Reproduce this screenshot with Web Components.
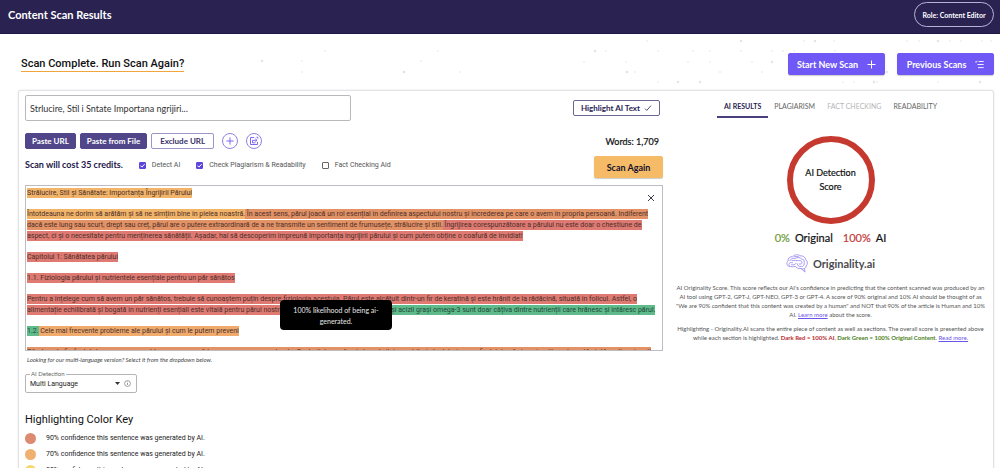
<!DOCTYPE html>
<html lang="en">
<head>
<meta charset="utf-8">
<title>Content Scan Results</title>
<style>
html{height:100%}
body{margin:0;height:100%;overflow:hidden;background:#fff;color:#111;font-family:Lato,"Liberation Sans",sans-serif;font-size:8px}
</style>
</head>
<body>
<scan-page></scan-page>

<template id="scan-page">
<style>
:host{display:block;height:100%;overflow:hidden}
main{position:relative;padding:0 6px 0 18px}
dot-field{position:absolute;top:0;right:0;z-index:-1}
.sub{display:flex;align-items:center;height:56px;padding:4px 0 0 3px;box-sizing:border-box;gap:12px}
h2{margin:0 auto 0 0;font:500 11px/14px Roboto,sans-serif;border-bottom:1px solid #f0a63c;color:#111}
.card{display:grid;grid-template-columns:minmax(0,2fr) minmax(0,1fr);gap:8px;padding:4px 3px 20px 6px;border:1px solid #e3e3e5;border-radius:3px;box-shadow:0 0 2px #0002;background:#fff}
</style>
<top-bar><span slot="title">Content Scan Results</span><span slot="role">Role: Content Editor</span></top-bar>
<main>
<dot-field></dot-field>
<div class="sub">
<h2>Scan Complete. Run Scan Again?</h2>
<ui-button kind="primary">Start New Scan<svg slot="icon" width="9" height="9" viewBox="0 0 9 9" fill="none" stroke="#fff"><path d="M4.5 .5v8M.5 4.5h8"/></svg></ui-button>
<ui-button kind="primary">Previous Scans<svg slot="icon" width="9" height="9" viewBox="0 0 9 9" fill="none" stroke="#fff" stroke-width=".9"><path d="M.3 1.7l.9.7L2.4.8M3.7 1.5h5M2.5 4.5h6.2M3 7.6h5.7"/></svg></ui-button>
</div>
<div class="card"><scan-form></scan-form><result-panel></result-panel></div>
</main>
</template>

<template id="top-bar">
<style>
:host{display:block}
header{display:flex;align-items:flex-start;justify-content:space-between;height:34px;padding:2px 6px 0 8px;box-sizing:border-box;background:#2a2352;border-bottom:1px solid #1d1746;color:#fff}
h1{margin:0;font-size:11px;font-weight:700;line-height:26px}
button{height:25px;width:80px;padding:0;border:1px solid #b8b2d8;border-radius:13px;background:none;color:#fff;font:700 7px Lato,sans-serif}
</style>
<header><h1><slot name="title"></slot></h1><button type="button"><slot name="role"></slot></button></header>
</template>

<template id="ui-button">
<style>
:host{display:block;flex:none}
button{display:flex;align-items:center;justify-content:center;gap:8px;width:100%;height:16px;padding:0 6px;box-sizing:border-box;border:1px solid #51468a;border-radius:2px;background:#51468a;color:#fff;font:700 8px Lato,sans-serif;white-space:nowrap}
:host([kind=primary]) button{height:22px;min-width:97px;background:#6f58f5;border-color:#6f58f5;font-size:9px;gap:9px;box-shadow:0 1px 1px #0003}
:host([kind=outline]) button{background:#fff;color:#3a3168;border-color:#9d95c6;padding:0 8px}
:host([kind=toggle]) button{background:#fff;color:#2a2352;border-color:#6d6790;gap:4px;min-width:87px}
:host([kind=amber]) button{height:22px;min-width:69px;background:#f5bb67;border-color:#f5bb67;color:#16122e;font-size:9px;box-shadow:0 1px 1px #0003}
:host([kind=round]) button{width:16px;padding:0;border-radius:50%;background:#fff;border-color:#8f83e0}
</style>
<button type="button"><slot></slot><slot name="icon"></slot></button>
</template>

<template id="scan-form">
<style>
:host{display:block}
.row{display:flex;align-items:center}
.title{justify-content:space-between;height:26px;padding-right:3px}
input.name{width:326px;height:26px;box-sizing:border-box;padding:0 4px;border:1px solid #b9b9bd;border-radius:2px;background:#fff;font:9px Lato,sans-serif;color:#333}
.tools{height:16px;margin-top:12px;gap:4px}
.tools .r{margin-left:4px}
.words{margin-left:auto;padding-right:4px;font-size:9px;color:#111;-webkit-text-stroke:0.2px}
.opts{height:22px;margin-top:7px;gap:16px}
.opts b{margin-bottom:4px;font-size:9px;color:#1d1747;line-height:18px}
.opts ui-button{margin-left:auto}
ui-check{margin-bottom:4px}
.note{margin:5px 0 0 2px;font-size:6px;line-height:8px;font-style:italic;color:#444}
h3{margin:18px 0 2px;font:400 11px/17px Roboto,sans-serif;color:#111}
ul{margin:0;padding:0;list-style:none}
</style>
<div class="row title"><input class="name" aria-label="Scan title" value="Strlucire, Stil i Sntate Importana ngrijiri...">
<ui-button kind="toggle">Highlight AI Text<svg slot="icon" width="8" height="8" viewBox="0 0 8 8" fill="none" stroke="#2a2352" stroke-width=".8"><path d="M1 4.6l1.8 1.8L7 1.6"/></svg></ui-button></div>
<div class="row tools"><ui-button>Paste URL</ui-button><ui-button>Paste from File</ui-button><ui-button kind="outline">Exclude URL</ui-button>
<ui-button kind="round" class="r"><svg slot="icon" width="8" height="8" viewBox="0 0 8 8" fill="none" stroke="#6f58f5" stroke-width=".9"><path d="M4 .4v7.2M.4 4h7.2"/></svg></ui-button>
<ui-button kind="round" class="r"><svg slot="icon" width="10" height="10" viewBox="0 0 10 10" fill="none" stroke="#6f58f5" stroke-width=".9"><path d="M5.200 1.500H1.500v7h7V6M3.500 6.800V4.300h4.200M6.300 2.700l1.700 1.600-1.700 1.600M7.500 1.200h1.300v1.500M3.500 6.800h2.800"/></svg></ui-button>
<span class="words">Words: 1,709</span></div>
<div class="row opts"><b>Scan will cost 35 credits.</b><ui-check checked>Detect AI</ui-check><ui-check checked>Check Plagiarism &amp; Readability</ui-check><ui-check>Fact Checking Aid</ui-check><ui-button kind="amber">Scan Again</ui-button></div>
<scan-editor></scan-editor>
<p class="note">Looking for our multi-language version? Select it from the dropdown below.</p>
<language-select></language-select>
<h3>Highlighting Color Key</h3>
<ul>
<key-row style="--dot:#dc8a70">90% confidence this sentence was generated by AI.</key-row>
<key-row style="--dot:#f0b070">70% confidence this sentence was generated by AI.</key-row>
<key-row style="--dot:#f5d76e">50% confidence this sentence was generated by AI.</key-row>
</ul>
</template>

<template id="ui-check">
<style>
:host{display:block}
label{display:flex;align-items:center;gap:6px;font:7px/10px Roboto,sans-serif;color:#555}
input{appearance:none;width:7px;height:7px;margin:0;border:1px solid #666;border-radius:1px;box-sizing:border-box;background:#fff}
input:checked{border-color:#5b45dd;background:#5b45dd}
.box{display:grid}
.box>*{grid-area:1/1}
svg{display:none}
input:checked+svg{display:block;pointer-events:none}
</style>
<label><span class="box"><input type="checkbox"><svg width="7" height="7" viewBox="0 0 7 7" fill="none" stroke="#fff"><path d="M1.4 3.6l1.5 1.5 2.8-3"/></svg></span><slot></slot></label>
</template>

<template id="scan-editor">
<style>
:host{display:block;position:relative;margin-top:7px}
.box{height:166px;box-sizing:border-box;padding:2px 1px;border:1px solid #bcbcc2;overflow:hidden;font:7px/11px Roboto,sans-serif;color:#4a2f2a;white-space:nowrap}
p{margin:0 0 10px}
mark{color:inherit;padding:1px 0}
.a{background:#f2b469}.o{background:#e39266}.r{background:#df7a72}.g{background:#5fbb8b;color:#1e4a38}.y{background:#efaa6c}
.close{position:absolute;top:8px;right:7px;width:10px;height:10px;padding:0;border:0;background:none;line-height:0}
.tip{position:absolute;left:255px;top:115px;width:112px;height:30px;box-sizing:border-box;padding:5px 8px 0;border-radius:4px;background:#000;color:#e8e8e8;font-size:7px;line-height:11px;text-align:center}
</style>
<div class="box" role="textbox" aria-label="Scanned content" contenteditable="true" spellcheck="false"><p><mark class="a">Strălucire, Stil și Sănătate: Importanța Îngrijirii Părului</mark></p><p><mark class="a">Întotdeauna ne dorim să arătăm și să ne simțim bine în pielea noastră.</mark><mark class="o"> În acest sens, părul joacă un rol esențial în definirea aspectului nostru și încrederea pe care o avem în propria persoană. Indiferent<br>dacă este lung sau scurt, drept sau creț, părul are o putere extraordinară de a ne transmite un sentiment de frumusețe, strălucire și stil.</mark><mark class="r"> Îngrijirea corespunzătoare a părului nu este doar o chestiune de<br>aspect, ci și o necesitate pentru menținerea sănătății. Așadar, hai să descoperim împreună importanța îngrijirii părului și cum putem obține o coafură de invidiat!</mark></p><p><mark class="r">Capitolul 1: Sănătatea părului</mark></p><p><mark class="r">1.1. Fiziologia părului și nutrientele esențiale pentru un păr sănătos</mark></p><p><mark class="r">Pentru a înțelege cum să avem un păr sănătos, trebuie să cunoaștem puțin despre fiziologia acestuia. Părul este alcătuit dintr-un fir de keratină și este hrănit de la rădăcină, situată în folicul. Astfel, o<br>alimentație echilibrată și bogată în nutrienți esențiali este vitală pentru părul nostru.</mark><mark class="g"> Proteinele, vitaminele A, B, C, D, E și acizii grași omega-3 sunt doar câțiva dintre nutrienții care hrănesc și întăresc părul.</mark></p><p><mark class="g">1.2.</mark><mark class="y"> Cele mai frecvente probleme ale părului și cum le putem preveni</mark></p><p><mark class="o">Părul poate fi afectat de numeroase probleme, precum căderea, uscarea sau matreața. Factorii de mediu și stresul zilnic contribuie la deteriorarea firului de păr, iar o îngrijire adecvată ajută mult mai mult</mark></p></div>
<button class="close" type="button" aria-label="Close"><svg width="10" height="10" viewBox="0 0 10 10" fill="none" stroke="#3d3a50"><path d="M2 2l6 6M8 2L2 8"/></svg></button>
<div class="tip" role="tooltip">100% likelihood of being ai-<br>generated.</div>
</template>

<template id="language-select">
<style>
:host{display:block;margin-top:7px}
fieldset{display:flex;align-items:center;width:112px;height:22px;box-sizing:border-box;margin:0;padding:0 5px 2px 4px;border:1px solid #b5b5b9;border-radius:2px;min-width:0}
legend{padding:0 1px;font-size:6px;line-height:6px;height:6px;color:#666}
.pick{display:grid;flex:1;align-items:center}
.pick>*{grid-area:1/1}
select{appearance:none;width:100%;height:12px;padding:0;border:0;background:none;font:7px Roboto,sans-serif;color:#222}
.arrow{justify-self:end;margin-right:4px;pointer-events:none}
</style>
<fieldset><legend><label for="lang">AI Detection</label></legend>
<span class="pick"><select id="lang"><option>Multi Language</option><option>English</option></select><svg class="arrow" width="5" height="3" viewBox="0 0 5 3"><path d="M0 0h5L2.500 3z" fill="#333"/></svg></span>
<svg width="7" height="7" viewBox="0 0 7 7" fill="none" stroke="#777" stroke-width=".7"><circle cx="3.500" cy="3.500" r="2.900"/><path d="M3.500 3v2M3.500 1.700v.7"/></svg></fieldset>
</template>

<template id="key-row">
<style>
:host{display:flex;align-items:center;gap:10px;height:16px;font:7px Roboto,sans-serif;color:#222}
i{width:11px;height:11px;border-radius:50%;background:var(--dot);flex:none}
</style>
<i></i><span><slot></slot></span>
</template>

<template id="result-panel">
<style>
:host{display:flex;flex-direction:column;align-items:center;text-align:center}
nav{display:flex;align-self:flex-start;margin-left:46px;height:23px}
nav button{padding:0 6px;border:0;border-bottom:1px solid transparent;background:none;font:7px/22px Lato,sans-serif;color:#666}
nav button.on{padding:0 7px;color:#2a2352;border-bottom:2px solid #4a4080;font-weight:700}
nav button:disabled{color:#b5b5b8}
.ring{display:grid;place-content:center;width:88px;height:88px;box-sizing:border-box;margin-top:18px;border:6px solid #c5392f;border-radius:50%;font-size:9px;line-height:14px;color:#111;-webkit-text-stroke:.2px}
.score{display:flex;gap:5px;margin-top:6px;font-size:11px;line-height:15px;color:#111;-webkit-text-stroke:.2px}
.score .g{color:#6f9a37}.score .r{color:#c5393a;margin-left:5px}
.logo{display:flex;align-items:center;gap:5px;height:20px;margin-top:8px;font-size:11px;font-weight:700;color:#4a4a4e}
p{margin:0 3px;font-size:6px;line-height:9px;color:#555}
p+p{margin-top:5px}
.logo+p{margin-top:10px}
a{color:#6a55e8}
b.r{color:#b8292b}b.g{color:#4c7f22}
</style>
<nav role="tablist"><button role="tab" class="on" aria-selected="true">AI RESULTS</button><button role="tab">PLAGIARISM</button><button role="tab" disabled>FACT CHECKING</button><button role="tab">READABILITY</button></nav>
<div class="ring">AI Detection<br>Score</div>
<div class="score"><span class="g">0%</span><span>Original</span><span class="r">100%</span><span>AI</span></div>
<div class="logo"><svg width="22" height="19" viewBox="0 0 22 19" fill="none" stroke="#9f90f2" stroke-width=".9" stroke-linecap="round"><path d="M3.500 12.500C.5 12.500.2 8.500 2 7 1.600 4 4.500 2.500 6.500 2.600 8.500.3 12.500.3 14 1.800c3-.3 5.500 1.400 5.800 3.900 2 1.500 2.100 4.600.3 6.300 0 1.500-.8 2.500-1.800 2.800l.8 3.300-4-3.600c-2.500.5-4.800-.6-5.600-2.200-2 .7-4.500.8-6-.3z"/><path d="M2.800 10.500C3 8.500 5 8.300 6.500 8.700M3.700 6.800C4.500 4.600 7 4 8.800 4.600c2-1.600 5.500-1.200 6.800.4 2 .2 3 1.600 2.600 3.300.6 2.200-.6 4.300-2.900 4.200-2.500.2-4-1-3.800-2.500M5.500 10.800c2 .4 4-.2 4.800-1.600M6 6.700c2.500-.8 4.500.3 6.500-.1 1.800-.3 3.600.4 3.500 1.900 0 1.500-1.500 2-2.700 1.500M8 2.800c1.500-.6 4-.4 5 .2M14 14.300c1.500 1 3 .8 4 .3"/></svg>Originality.ai</div>
<p>AI Originality Score. This score reflects our AI's confidence in predicting that the content scanned was produced by an AI tool using GPT-2, GPT-J, GPT-NEO, GPT-3 or GPT-4. A score of 90% original and 10% AI should be thought of as "We are 90% confident that this content was created by a human" and NOT that 90% of the article is Human and 10% AI. <a href="#score">Learn more</a> about the score.</p>
<p>Highlighting - Originality.AI scans the entire piece of content as well as sections. The overall score is presented above while each section is highlighted. <b class="r">Dark Red = 100% AI</b>, <b class="g">Dark Green = 100% Original Content.</b> <a href="#key">Read more.</a></p>
</template>

<template id="dot-field">
<style>:host{display:block;line-height:0}</style>
<svg width="760" height="56" viewBox="240 34 760 56" fill="#e4e4e8"><g id="dots"></g></svg>
</template>

<script>
const define = (name, setup) => customElements.define(name, class extends HTMLElement {
  connectedCallback() {
    if (this.shadowRoot) return;
    const root = this.attachShadow({ mode: 'open' });
    root.append(document.getElementById(name).content.cloneNode(true));
    if (setup) setup(this, root);
  }
});
define('dot-field', (host, root) => {
  const dots = [[262,61],[302,61],[325,51],[302,72],[404,72],[421,61],[438,51],[460,72],[595,51],[606,51],[584,62],[626,62],[627,72],[635,72],[658,51],[658,82],[678,82],[688,62],[710,51],[710,62],[741,41],[741,51],[752,62],[762,72],[772,62],[783,51],[794,51],[804,41],[815,41],[834,41],[843,82],[854,82],[874,82],[877,82],[907,41],[919,41],[938,41],[950,41],[961,41],[938,82],[980,82],[991,41],[982,41],[835,51],[887,72],[693,51],[720,72],[647,41],[700,82],[772,51]];
  root.getElementById('dots').innerHTML = dots.map(([x, y], i) => `<circle cx="${x}" cy="${y}" r="${i % 4 ? .8 : 1.3}"/>`).join('');
});
define('top-bar');
define('ui-button');
define('ui-check', (host, root) => { root.querySelector('input').checked = host.hasAttribute('checked'); });
define('scan-editor');
define('language-select');
define('key-row', host => host.setAttribute('role', 'listitem'));
define('result-panel');
define('scan-form');
define('scan-page');
</script>
</body>
</html>
